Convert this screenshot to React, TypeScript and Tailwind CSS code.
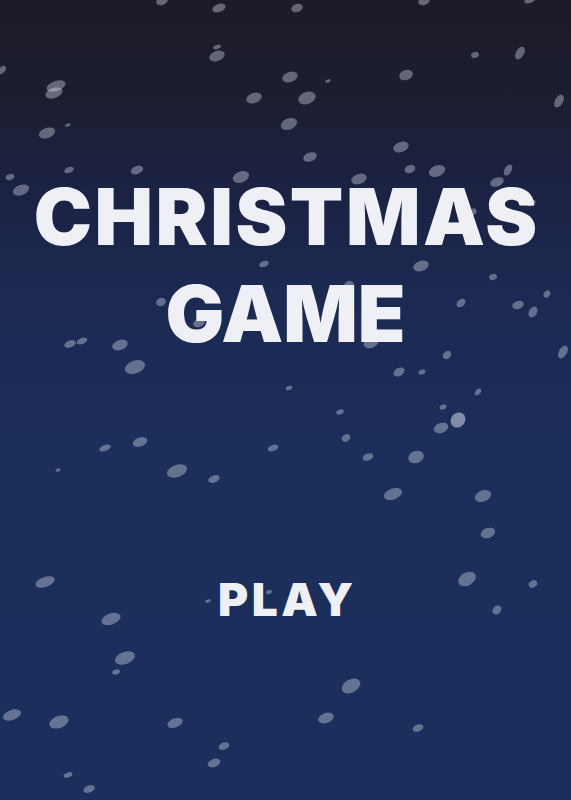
import React from "react";

type Flake = [number, number, number, number, number?, number?];

// x, y, rx, ry, rotation (deg), opacity
const FLAKES: Flake[] = [
  [162, 1, 6, 4], [219, 8, 7, 4], [297, 8, 6, 4], [424, 1, 6, 4], [530, 0, 6, 3],
  [217, 47, 4, 2], [217, 56, 8, 5], [475, 55, 4, 3], [520, 53, 7, 4, -60], [2, 70, 5, 3, -50],
  [56, 86, 10, 5], [54, 93, 9, 5], [290, 77, 8, 5], [328, 81, 3, 1.5], [406, 75, 7, 5],
  [254, 98, 8, 5], [307, 98, 9, 6], [559, 101, 7, 4, -60], [68, 125, 3, 1.5], [47, 133, 8.5, 5],
  [289, 124, 8.5, 5.5], [401, 147, 8, 5], [310, 157, 7, 4.5], [10, 177, 4.5, 3], [69, 170, 5, 3],
  [137, 170, 6.5, 4], [241, 177, 8.5, 5.5], [359, 179, 8, 5], [410, 169, 5.5, 4], [437, 171, 8.5, 5.5],
  [508, 170, 6, 3.5, -60], [497, 182, 7, 4.5], [21, 190, 8.5, 5],
  [473, 212, 4, 3, -40], [531, 203, 5, 3], [264, 264, 5, 3], [421, 266, 8, 5], [493, 277, 4, 3],
  [547, 294, 4, 3, -50], [461, 303, 5, 3.5, -40], [518, 305, 6, 4], [533, 312, 6, 4, -60],
  [161, 302, 5, 4], [349, 285, 5, 4], [199, 323, 6, 4],
  [70, 344, 6, 3.5], [82, 341, 5.5, 3], [120, 345, 8, 5], [371, 343, 7.5, 5], [447, 355, 4.5, 3.5, -40],
  [563, 352, 7, 4, -60], [135, 367, 10.5, 6.5], [399, 372, 6, 4, -30], [422, 372, 3.5, 2.5],
  [289, 388, 3.5, 2], [478, 392, 4, 2.5, -50], [340, 412, 4, 2.5], [443, 407, 3.5, 2.5],
  [458, 420, 8, 7, -50, 0.5], [441, 428, 7.5, 5], [346, 438, 4.5, 3.5, -30], [140, 442, 7.5, 4.5],
  [105, 448, 6, 3], [273, 448, 5.5, 3], [368, 457, 5.5, 3.5], [416, 457, 8, 6],
  [177, 471, 10.5, 6], [58, 470, 2.5, 1.5], [214, 479, 6, 3.5],
  [393, 494, 9.5, 5.5], [483, 496, 8.5, 5.5], [488, 533, 7.5, 5],
  [45, 582, 10, 5], [467, 579, 9.5, 6.5, -30], [533, 584, 4.5, 3.5, -30], [208, 601, 3, 1.5],
  [269, 592, 3, 2], [497, 610, 5, 4, -50], [111, 619, 10, 5.5], [125, 658, 10.5, 6], [116, 672, 4, 2.5],
  [351, 686, 10, 6.5, -30], [12, 715, 9.5, 5], [59, 722, 10, 6], [175, 723, 8, 4.5], [326, 718, 8, 5],
  [418, 728, 5.5, 3.5], [224, 746, 5.5, 3.5], [214, 763, 6.5, 4], [68, 775, 4.5, 2.5], [89, 789, 6, 3.5],
];

function Snow() {
  return (
    <svg
      className="pointer-events-none absolute inset-0 h-full w-full"
      viewBox="0 0 571 800"
      preserveAspectRatio="none"
    >
      {FLAKES.map(([x, y, rx, ry, rot = -20, op = 0.36], i) => (
        <ellipse
          key={i}
          cx={x}
          cy={y}
          rx={rx}
          ry={ry}
          fill="#e6ecf7"
          fillOpacity={op}
          transform={`rotate(${rot} ${x} ${y})`}
        />
      ))}
    </svg>
  );
}

export default function App() {
  return (
    <div className="relative flex h-[800px] w-full flex-col items-center overflow-hidden bg-[linear-gradient(to_bottom,#1c1b28_0%,#1c1d2e_10%,#1b2243_24%,#1c2a53_38%,#1c2e5a_55%,#1c2f5c_100%)] font-['Inter',sans-serif] text-[#eef0f5]">
      <Snow />
      <h1 className="relative z-10 flex flex-col items-center pt-[168px] text-[78px] font-black leading-[97px]">
        <span className="pl-[2.5px] tracking-[2.5px]">CHRISTMAS</span>
        <span>GAME</span>
      </h1>
      <button className="relative z-10 mt-[214px] pl-[3.5px] text-[46px] font-black leading-none tracking-[3.5px]">
        PLAY
      </button>
    </div>
  );
}
